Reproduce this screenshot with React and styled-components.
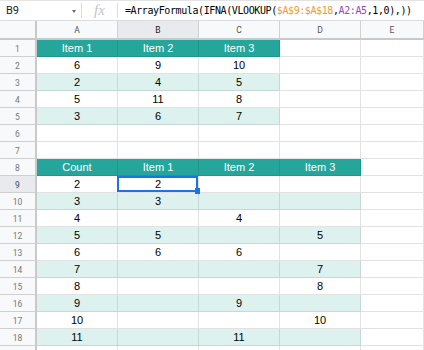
import React from 'react';
import styled, { createGlobalStyle, css } from 'styled-components';

const GlobalStyle = createGlobalStyle`
  html, body { margin: 0; padding: 0; background: #fff; overflow: hidden; }
  body { font-family: "Liberation Sans", Arial, sans-serif; }
  * { box-sizing: border-box; }
`;

const Page = styled.div`
  width: 424px;
  height: 350px;
  overflow: hidden;
  display: flex;
  flex-direction: column;
`;

const FormulaBar = styled.div`
  display: flex;
  align-items: center;
  height: 21px;
  flex: 0 0 21px;
  border-top: 1px solid #e3e3e3;
  border-bottom: 1px solid #dadce0;
`;

const NameBox = styled.div`
  width: 81px;
  display: flex;
  align-items: center;
  justify-content: space-between;
  padding: 0 5px 0 6px;
  font-family: Roboto, "Liberation Sans", sans-serif;
  font-size: 11px;
  color: #202124;
`;

const Caret = styled.span`
  width: 0;
  height: 0;
  border-left: 2.5px solid transparent;
  border-right: 2.5px solid transparent;
  border-top: 3px solid #666;
  margin-top: 2px;
`;

const Divider = styled.div`
  width: 1px;
  height: 15px;
  background: #dadce0;
`;

const Fx = styled.div`
  width: 35px;
  text-align: center;
  font-family: "Liberation Serif", serif;
  font-style: italic;
  font-size: 15px;
  color: #c4c4c4;
  line-height: 19px;
`;

const Formula = styled.div`
  padding-left: 7px;
  font-family: "DejaVu Sans Mono", "Liberation Mono", monospace;
  font-size: 10px;
  letter-spacing: -0.4px;
  white-space: nowrap;
  color: #000;
`;

const Ref = styled.span`
  color: ${(p) => p.$color};
`;

const Sheet = styled.div`
  display: grid;
  grid-template-columns: 37px repeat(4, 81px) 1fr;
  grid-template-rows: 19px;
  grid-auto-rows: 17px;
`;

const headerText = css`
  font-family: Roboto, "Liberation Sans", sans-serif;
  font-size: 8.5px;
  display: flex;
  align-items: center;
  justify-content: center;
`;

const Corner = styled.div`
  background: #f8f9fa;
  border-right: 2px solid #c9c9c9;
  border-bottom: 2px solid #c9c9c9;
`;

const ColHeader = styled.div`
  ${headerText};
  background: ${(p) => (p.$selected ? '#e8eaed' : '#f8f9fa')};
  color: ${(p) => (p.$selected ? '#222' : '#555')};
  border-right: 1px solid #d0d0d0;
  border-bottom: 2px solid #c9c9c9;
`;

const RowHeader = styled.div`
  ${headerText};
  padding-top: 1px;
  background: ${(p) => (p.$selected ? '#e8eaed' : '#f8f9fa')};
  color: ${(p) => (p.$selected ? '#444' : '#777')};
  border-right: 2px solid #c9c9c9;
  border-bottom: 1px solid #cfcfcf;
`;

const variants = {
  head: css`
    background: #26a69a;
    color: #fff;
    border-right-color: #1f978b;
    border-bottom-color: #1f978b;
  `,
  band: css`
    background: #ddf1ef;
    color: #000;
    border-right-color: #c5d8d5;
    border-bottom-color: #c5d8d5;
  `,
  plain: css`
    background: #fff;
    color: #000;
  `,
};

const Cell = styled.div`
  position: relative;
  border-right: 1px solid #e2e2e2;
  border-bottom: 1px solid #e2e2e2;
  font-size: 11px;
  line-height: 15px;
  padding-top: 1px;
  text-align: center;
  white-space: nowrap;
  ${(p) => variants[p.$variant || 'plain']};
`;

const Selection = styled.div`
  position: absolute;
  top: 0;
  left: -1px;
  right: 0;
  bottom: 0;
  border: 2px solid #1a73e8;
  z-index: 2;
  pointer-events: none;
`;

const Handle = styled.div`
  position: absolute;
  right: -4px;
  bottom: -4px;
  width: 5px;
  height: 6px;
  background: #1a73e8;
`;

const COLS = ['A', 'B', 'C', 'D', 'E'];

const rows = [
  { v: 'head', w: 3, d: ['Item 1', 'Item 2', 'Item 3'] },
  { v: 'plain', w: 3, d: ['6', '9', '10'] },
  { v: 'band', w: 3, d: ['2', '4', '5'] },
  { v: 'plain', w: 3, d: ['5', '11', '8'] },
  { v: 'band', w: 3, d: ['3', '6', '7'] },
  { v: 'plain', w: 0, d: [] },
  { v: 'plain', w: 0, d: [] },
  { v: 'head', w: 4, d: ['Count', 'Item 1', 'Item 2', 'Item 3'] },
  { v: 'plain', w: 4, d: ['2', '2', '', ''] },
  { v: 'band', w: 4, d: ['3', '3', '', ''] },
  { v: 'plain', w: 4, d: ['4', '', '4', ''] },
  { v: 'band', w: 4, d: ['5', '5', '', '5'] },
  { v: 'plain', w: 4, d: ['6', '6', '6', ''] },
  { v: 'band', w: 4, d: ['7', '', '', '7'] },
  { v: 'plain', w: 4, d: ['8', '', '', '8'] },
  { v: 'band', w: 4, d: ['9', '', '9', ''] },
  { v: 'plain', w: 4, d: ['10', '', '', '10'] },
  { v: 'band', w: 4, d: ['11', '', '11', ''] },
  { v: 'plain', w: 0, d: [] },
];

export default function App() {
  return (
    <Page>
      <GlobalStyle />
      <FormulaBar>
        <NameBox>
          B9
          <Caret />
        </NameBox>
        <Divider />
        <Fx>fx</Fx>
        <Divider />
        <Formula>
          =ArrayFormula(IFNA(VLOOKUP(
          <Ref $color="#f09a36">$A$9:$A$18</Ref>,<Ref $color="#9a43c2">A2:A5</Ref>,1,0),))
        </Formula>
      </FormulaBar>
      <Sheet>
        <Corner />
        {COLS.map((c) => (
          <ColHeader key={c} $selected={c === 'B'}>
            {c}
          </ColHeader>
        ))}
        {rows.map((r, i) => {
          const n = i + 1;
          return (
            <React.Fragment key={n}>
              <RowHeader $selected={n === 9}>{n}</RowHeader>
              {COLS.map((c, ci) => {
                const inTable = ci < r.w;
                const isSel = n === 9 && c === 'B';
                return (
                  <Cell key={c} $variant={inTable ? r.v : 'plain'}>
                    {inTable ? r.d[ci] : ''}
                    {isSel && (
                      <Selection>
                        <Handle />
                      </Selection>
                    )}
                  </Cell>
                );
              })}
            </React.Fragment>
          );
        })}
      </Sheet>
    </Page>
  );
}
